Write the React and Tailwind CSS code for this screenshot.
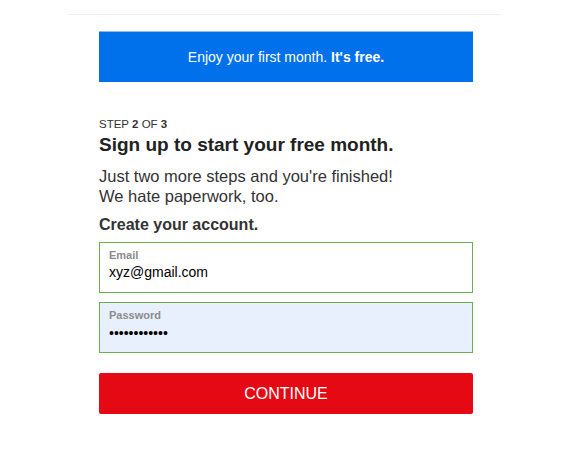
export default function App() {
  return (
    <div className="w-[569px] h-[449px] bg-white">
      <div className="mx-auto w-[433px] h-[15px] border-b border-[#f0f0f0]" />
      <div className="ml-[99px] w-[374px] pt-4 font-['Liberation_Sans',Arial,sans-serif] text-[#333]">
        <div className="h-[51px] bg-[#0071eb] border-t border-[#8ab8f0] flex items-center justify-center text-white text-[14px]">
          <span>Enjoy your first month.&nbsp;<b>It's free.</b></span>
        </div>
        <div className="mt-[36px] text-[11.5px] leading-[13px] text-[#333]">
          STEP <b>2</b> OF <b>3</b>
        </div>
        <h1 className="mt-[2px] text-[19px] leading-[24px] font-bold text-[#222]">
          Sign up to start your free month.
        </h1>
        <p className="mt-[9px] text-[16.5px] leading-[20px] text-[#333]">
          Just two more steps and you're finished!
          <br />
          We hate paperwork, too.
        </p>
        <div className="mt-[9px] text-[16px] leading-[20px] font-bold text-[#333]">
          Create your account.
        </div>
        <div className="mt-[7px] h-[51px] border-[1.5px] border-[#6bb04c] bg-white px-[9px] pt-[5px] flex flex-col">
          <span className="text-[11px] leading-[14px] font-bold text-[#8c8c8c]">Email</span>
          <span className="mt-[1px] text-[14px] leading-[18px] text-[#000]">xyz@gmail.com</span>
        </div>
        <div className="mt-[9px] h-[51px] border-[1.5px] border-[#6bb04c] bg-[#e8f0fe] px-[9px] pt-[5px] flex flex-col">
          <span className="text-[11px] leading-[14px] font-bold text-[#8c8c8c]">Password</span>
          <span className="mt-[2px] text-[14px] leading-[18px] text-[#000]">••••••••••••</span>
        </div>
        <button className="mt-[20px] w-full h-[41px] bg-[#e50914] rounded-[2px] text-white text-[16px] flex items-center justify-center">
          CONTINUE
        </button>
      </div>
    </div>
  );
}
